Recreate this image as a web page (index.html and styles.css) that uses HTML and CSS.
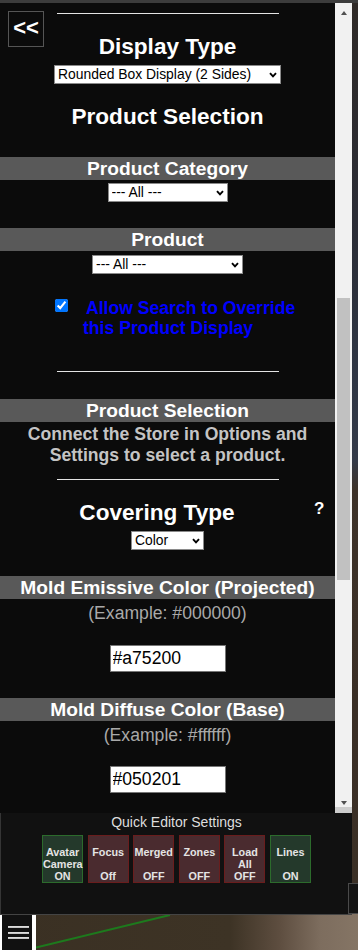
FILE: index.html
```html
<!DOCTYPE html>
<html>
<head>
<meta charset="utf-8">
<link rel="stylesheet" href="styles.css">
</head>
<body>
<div class="topbar"></div>
<div class="panel">
  <div class="content">
    <div class="rule rule-top"></div>
    <div class="title t-display">Display Type</div>
    <div class="sel sel-display"><select><option>Rounded Box Display (2 Sides)</option></select><svg class="chev" width="8" height="6" viewBox="0 0 8 6"><path d="M1 1.2 L4 4.4 L7 1.2" fill="none" stroke="#000" stroke-width="1.9"/></svg></div>
    <div class="title t-prodsel">Product Selection</div>

    <div class="band band-cat">Product Category</div>
    <div class="sel sel-cat"><select><option>--- All ---</option></select><svg class="chev" width="8" height="6" viewBox="0 0 8 6"><path d="M1 1.2 L4 4.4 L7 1.2" fill="none" stroke="#000" stroke-width="1.9"/></svg></div>

    <div class="band band-prod">Product</div>
    <div class="sel sel-prod"><select><option>--- All ---</option></select><svg class="chev" width="8" height="6" viewBox="0 0 8 6"><path d="M1 1.2 L4 4.4 L7 1.2" fill="none" stroke="#000" stroke-width="1.9"/></svg></div>

    <div class="check-row">
      <input type="checkbox" class="check" checked>
      <label class="check-label"><span class="lead">Allow Search to Override</span> this Product Display</label>
    </div>

    <div class="rule rule-mid"></div>

    <div class="band band-sel">Product Selection</div>
    <div class="note">Connect the Store in Options and Settings to select a product.</div>

    <div class="rule rule-low"></div>

    <div class="cover-row">
      <div class="title t-cover">Covering Type</div>
      <div class="help">?</div>
    </div>
    <div class="sel sel-color"><select><option>Color</option></select><svg class="chev" width="8" height="6" viewBox="0 0 8 6"><path d="M1 1.2 L4 4.4 L7 1.2" fill="none" stroke="#000" stroke-width="1.9"/></svg></div>

    <div class="band band-emis">Mold Emissive Color (Projected)</div>
    <div class="example">(Example: #000000)</div>
    <input class="color-input in-emis" type="text" value="#a75200">

    <div class="band band-diff">Mold Diffuse Color (Base)</div>
    <div class="example">(Example: #ffffff)</div>
    <input class="color-input in-diff" type="text" value="#050201">
  </div>
  <div class="scrollbar">
    <div class="sb-btn sb-up"><span class="tri-up"></span></div>
    <div class="sb-track"><div class="sb-thumb"></div></div>
    <div class="sb-btn sb-down"><span class="tri-down"></span></div>
    <div class="sb-corner"></div>
  </div>
</div>

<div class="quick">
  <div class="quick-title">Quick Editor Settings</div>
  <div class="quick-buttons">
    <div class="qbtn on">Avatar<br>Camera<br>ON</div>
    <div class="qbtn off">Focus<br><br>Off</div>
    <div class="qbtn off">Merged<br><br>OFF</div>
    <div class="qbtn off">Zones<br><br>OFF</div>
    <div class="qbtn off">Load<br>All<br>OFF</div>
    <div class="qbtn on">Lines<br><br>ON</div>
  </div>
</div>

<div class="bottom-row">
  <div class="menu-btn"><span></span><span></span><span></span></div>
  <svg class="scene" width="322" height="35" viewBox="0 0 322 35">
    <line x1="0" y1="32.5" x2="134" y2="0" stroke="#1d7a1d" stroke-width="2"/>
  </svg>
</div>

<div class="back">&lt;&lt;</div>
<div class="side-box"></div>
</body>
</html>
```

FILE: styles.css
```css
html, body {
  margin: 0;
  padding: 0;
}
body {
  width: 358px;
  height: 950px;
  overflow: hidden;
  position: relative;
  font-family: "Liberation Sans", Arial, sans-serif;
  background:
    linear-gradient(to bottom, #2f2a27 0px, #2b2d36 220px, #2f3644 380px, #343a48 460px, #3d3229 490px, #3a2f26 700px, #3b3026 914px, transparent 914px),
    linear-gradient(to right, #3a3023 0px, #3d3325 230px, #5e4e40 280px, #7d6d5e 320px, #857565 358px);
}

.topbar {
  height: 3px;
  background: #3c3c3c;
}

.panel {
  width: 352px;
  height: 810px;
  display: flex;
  background: #0b0b0b;
}

.content {
  width: 335px;
  overflow: hidden;
  padding-top: 10px;
  box-sizing: border-box;
  color: #fff;
  text-align: center;
}

.rule {
  width: 222px;
  height: 1px;
  margin: 0 auto;
  background: #e4e4e4;
}
.rule-mid { margin-top: 33px; }
.rule-low { margin-top: 13px; }

.title {
  font-weight: bold;
  color: #fff;
  font-size: 22.6px;
  line-height: 26px;
}
.t-display { margin-top: 20px; }
.t-prodsel { margin-top: 20px; }

.sel {
  position: relative;
  margin: 0 auto;
  height: 19px;
}
.sel select {
  appearance: none;
  -webkit-appearance: none;
  display: block;
  width: 100%;
  height: 19px;
  box-sizing: border-box;
  margin: 0;
  padding: 0 0 0 3px;
  border: 1px solid #8a8a8a;
  border-radius: 0;
  background: #fff;
  color: #000;
  font-family: "Liberation Sans", Arial, sans-serif;
  font-size: 13.9px;
  line-height: 17px;
}
.chev {
  position: absolute;
  right: 4px;
  top: 7px;
}
.sel-display { width: 227px; margin-top: 5px; }
.sel-cat { width: 120px; margin-top: 3px; }
.sel-prod { width: 151px; margin-top: 4px; }
.sel-color { width: 73px; margin-top: 5px; }

.band {
  height: 23px;
  line-height: 23px;
  background: #595959;
  color: #fff;
  font-size: 19.2px;
  font-weight: bold;
  text-align: center;
  white-space: nowrap;
}
.band-cat { margin-top: 27px; }
.band-prod { margin-top: 26px; }
.band-sel { margin-top: 27px; }
.band-emis { margin-top: 26px; }
.band-diff { margin-top: 26px; }

.check-row {
  display: flex;
  align-items: flex-start;
  margin-top: 24px;
  text-align: left;
}
.check {
  width: 13px;
  height: 13px;
  margin: 1px 0 0 55px;
  accent-color: #0075ff;
  flex: none;
}
.check-label {
  width: 235px;
  margin-left: 15px;
  color: #0000ff;
  font-size: 17.6px;
  line-height: 20px;
  font-weight: bold;
}
.lead {
  padding-left: 3px;
}

.note {
  margin: 2px auto 0;
  width: 300px;
  color: #c4c4c4;
  font-size: 17.6px;
  line-height: 21px;
  font-weight: bold;
}

.cover-row {
  display: grid;
  grid-template-columns: 1fr 21px;
  margin-top: 20px;
}
.help {
  align-self: start;
  text-align: left;
  font-size: 17px;
  line-height: 18px;
  font-weight: bold;
  color: #fff;
}

.example {
  margin-top: 4px;
  color: #a9a9a9;
  font-size: 17.6px;
  line-height: 20px;
}

.color-input {
  display: block;
  width: 116px;
  height: 27px;
  box-sizing: border-box;
  margin: 22px auto 0;
  padding: 0 0 0 2px;
  border: 1px solid #767676;
  border-radius: 0;
  background: #fff;
  color: #000;
  font-family: "Liberation Sans", Arial, sans-serif;
  font-size: 17.6px;
  outline: none;
}
.in-diff { margin-top: 21px; }

.scrollbar {
  width: 17px;
  display: flex;
  flex-direction: column;
  background: #f1f1f1;
}
.sb-btn {
  height: 17px;
  display: flex;
  justify-content: center;
  box-sizing: border-box;
}
.sb-up {
  align-items: flex-start;
  padding-top: 8px;
}
.sb-down {
  align-items: flex-end;
  padding-bottom: 2px;
}
.tri-up {
  width: 0;
  height: 0;
  border-left: 3.5px solid transparent;
  border-right: 3.5px solid transparent;
  border-bottom: 4px solid #505050;
}
.tri-down {
  width: 0;
  height: 0;
  border-left: 3.5px solid transparent;
  border-right: 3.5px solid transparent;
  border-top: 4px solid #505050;
}
.sb-track {
  flex: 1;
  padding-top: 278px;
}
.sb-thumb {
  height: 282px;
  margin: 0 2px;
  background: #c1c1c1;
}
.sb-corner {
  height: 6px;
  background: #cdcdcd;
}

.quick {
  width: 352px;
  height: 102px;
  box-sizing: border-box;
  background: #111111;
  border-left: 1px solid #353535;
  border-bottom: 1px solid #444;
  padding-top: 1px;
  text-align: center;
}
.quick-title {
  color: #dedede;
  font-size: 14px;
  line-height: 16px;
}
.quick-buttons {
  display: flex;
  justify-content: center;
  gap: 4.6px;
  margin-top: 5px;
}
.qbtn {
  width: 41px;
  height: 48px;
  box-sizing: border-box;
  padding-top: 10px;
  font-size: 10.8px;
  line-height: 12px;
  font-weight: bold;
  color: #e4e4e4;
  text-align: center;
  white-space: nowrap;
}
.qbtn.on {
  background: #24392b;
  border: 1px solid #2c6b2c;
}
.qbtn.off {
  background: #4a2b2f;
  border: 1px solid #6a1d1d;
}

.bottom-row {
  display: flex;
  height: 35px;
}
.menu-btn {
  width: 36px;
  height: 35px;
  box-sizing: border-box;
  background: #111;
  border-left: 2px solid #fff;
  border-right: 4px solid #fff;
  padding: 11px 0 0 6px;
  display: flex;
  flex-direction: column;
  gap: 3.5px;
}
.menu-btn span {
  display: block;
  width: 21px;
  height: 2px;
  background: linear-gradient(to bottom, #e8e8e8, #b8b8b8);
}
.scene {
  display: block;
}

.back {
  position: absolute;
  left: 8px;
  top: 11px;
  width: 36px;
  height: 36px;
  box-sizing: border-box;
  border: 1px solid #555;
  background: #0b0b0b;
  color: #fff;
  font-size: 22px;
  font-weight: bold;
  line-height: 32px;
  text-align: center;
}

.side-box {
  position: absolute;
  left: 348px;
  top: 883px;
  width: 14px;
  height: 31px;
  box-sizing: border-box;
  border: 1px solid #4a4a4a;
  background: #141414;
}
```
